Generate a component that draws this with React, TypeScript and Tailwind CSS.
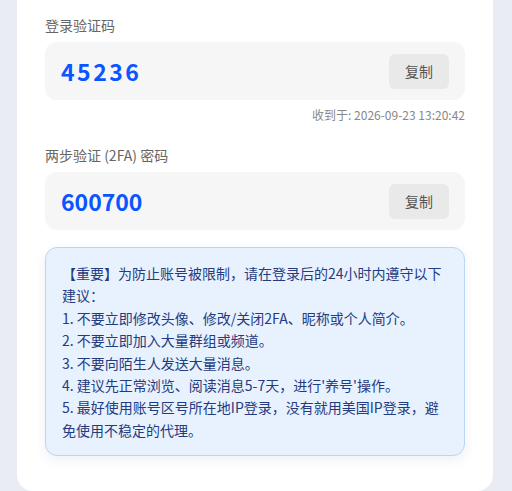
import React from "react";

const font = { fontFamily: '"Noto Sans CJK SC", "Noto Sans", sans-serif' };

function CodeBox({ code, wide }: { code: string; wide?: boolean }) {
  return (
    <div className="flex h-[58px] items-center justify-between rounded-xl bg-[#f6f6f6] pl-4 pr-4">
      <span
        className={
          wide
            ? "text-[23px] font-bold leading-none tracking-[2.5px] text-[#0a55ff]"
            : "text-[23px] font-bold leading-none text-[#0a55ff]"
        }
      >
        {code}
      </span>
      <button className="flex h-[35px] w-[60px] items-center justify-center rounded-md bg-[#e9e9e9] text-[14px] text-[#555]">
        复制
      </button>
    </div>
  );
}

export default function App() {
  const tips = [
    "【重要】为防止账号被限制，请在登录后的24小时内遵守以下建议：",
    "1. 不要立即修改头像、修改/关闭2FA、昵称或个人简介。",
    "2. 不要立即加入大量群组或频道。",
    "3. 不要向陌生人发送大量消息。",
    "4. 建议先正常浏览、阅读消息5-7天，进行'养号'操作。",
    "5. 最好使用账号区号所在地IP登录，没有就用美国IP登录，避免使用不稳定的代理。",
  ];
  return (
    <div className="min-h-[491px] bg-[#e9ecf2]" style={font}>
      <div className="ml-[17px] w-[476px] rounded-b-2xl bg-white px-[28px] pb-[35px] pt-[15px]">
        <div className="mb-[7px] text-[14px] leading-5 text-[#666]">登录验证码</div>
        <CodeBox code="45236" wide />
        <div className="mt-[6px] text-right text-[12px] leading-[18px] text-[#888]">
          收到于: 2026-09-23 13:20:42
        </div>
        <div className="mb-[7px] mt-[21px] text-[14px] leading-5 text-[#666]">两步验证 (2FA) 密码</div>
        <CodeBox code="600700" />
        <div className="mt-[17px] rounded-xl border border-[#bcd4f8] bg-[#e8f1fe] px-4 py-[14px] text-[14px] leading-[22.4px] text-[#253b80] shadow-[0_4px_12px_rgba(30,60,120,0.08)]">
          {tips.map((t) => (
            <div key={t}>{t}</div>
          ))}
        </div>
      </div>
    </div>
  );
}
